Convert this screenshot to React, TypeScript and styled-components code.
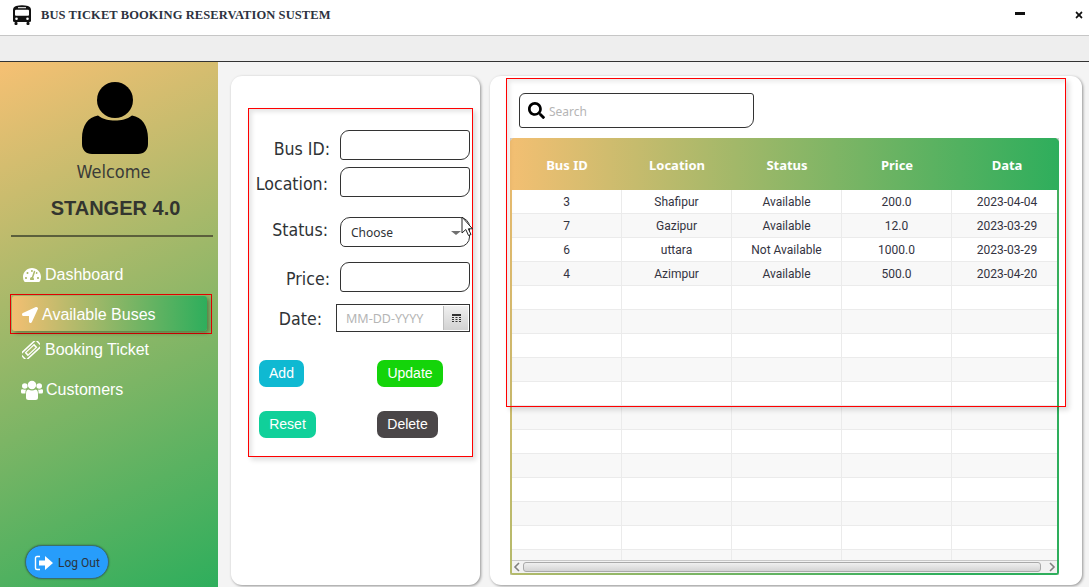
import React from "react";
import styled, { createGlobalStyle } from "styled-components";
import { FaLocationArrow, FaSearch, FaTachometerAlt, FaTimes } from "react-icons/fa";

const Global = createGlobalStyle`
  html, body { margin: 0; padding: 0; background: #f4f4f4; }
  * { box-sizing: border-box; }
`;

const labelFont = `"DejaVu Sans Condensed", "DejaVu Sans", sans-serif`;

const Screen = styled.div`
  width: 1089px; height: 587px; overflow: hidden; display: flex; flex-direction: column;
  background: #f4f4f4; font-family: "Liberation Sans", Arial, sans-serif;
`;
const TitleBar = styled.header`
  height: 36px; flex: none; display: flex; align-items: center; background: #fff;
  border-bottom: 1px solid #c6c6c6; padding: 0 5px 5px 13px;
`;
const BusIcon = styled.svg`
  width: 18px; height: 20px; flex: none;
`;
const TitleText = styled.h1`
  margin: 0 0 0 10px; flex: 1; font: bold 12.5px "Liberation Serif", serif; color: #2c3240; letter-spacing: 0.09px;
`;
const MinButton = styled.span`
  width: 10px; height: 3px; background: #111; margin: 0 49px 3px 0; flex: none;
`;
const MenuBar = styled.div`
  height: 26px; flex: none; background: #eeeeee; border-bottom: 1px solid #333;
`;
const Main = styled.main`
  flex: 1; min-height: 0; display: flex;
`;
const Sidebar = styled.aside`
  width: 218px; flex: none; display: flex; flex-direction: column; padding-top: 20px;
  background: linear-gradient(155deg, #f6c073 0%, #2eae5c 100%);
`;
const Avatar = styled.svg`
  width: 66px; height: 72px; margin-left: 82px; flex: none;
`;
const Welcome = styled.div`
  margin-top: 7px; text-align: center; padding-left: 9px; font: 18px/22px ${labelFont}; color: #3b3b38;
`;
const UserName = styled.div`
  margin-top: 13px; text-align: center; padding-left: 13px; font: bold 20px/24px "Liberation Sans", sans-serif; color: #33352f;
`;
const Divider = styled.hr`
  margin: 15px 5px 0 11px; border: 0; height: 2px; background: #5b5f3c;
`;
const Nav = styled.nav`
  display: flex; flex-direction: column;
`;
const NavItem = styled.div<{ $top: number; $indent: number; $gap: number }>`
  height: 24px; display: flex; align-items: center; margin-top: ${p => p.$top}px;
  padding-left: ${p => p.$indent}px; gap: ${p => p.$gap}px; color: #fff; font-size: 16px; white-space: nowrap;
`;
const ActiveFrame = styled.div`
  margin: 7px 0 0 10px; width: 202px; height: 40px; border: 1px solid #e60000; padding: 1px;
`;
const ActiveItem = styled.div`
  width: 195px; height: 35px; display: flex; align-items: center; gap: 4px; padding: 2px 0 0 10px;
  color: #fff; font-size: 16px; border-radius: 3px; white-space: nowrap;
  background: linear-gradient(to right, #f3bf72 0%, #2eae5c 100%);
  box-shadow: 2px 2px 4px rgba(0,0,0,0.35);
`;
const LogOut = styled.button`
  margin: auto 0 8px 25px; width: 84px; height: 34px; padding: 1px 0 0 8px; display: flex; align-items: center; gap: 5px;
  border-radius: 17px; background: #279dfb; border: 1px solid #3c6f68; box-shadow: 0 0 2px rgba(0,0,0,0.4);
  color: #2b3440; font: 12px Roboto, sans-serif;
`;
const Content = styled.div`
  flex: 1; display: flex; gap: 10px; padding: 14px 7px 2px 13px;
`;
const Panel = styled.section<{ $w: number }>`
  position: relative; width: ${p => p.$w}px; height: 509px; flex: none; background: #fff; border-radius: 11px;
  box-shadow: 1px 1px 3px rgba(0,0,0,0.4);
`;
const FormCard = styled.form`
  width: 225px; height: 349px; margin: 32px 0 0 17px; padding: 21px 2px 0 0;
  border: 1px solid #f00;
  box-shadow: 3px 3px 5px rgba(0,0,0,0.14), inset 3px 3px 4px rgba(0,0,0,0.1);
`;
const Row = styled.div<{ $top: number }>`
  display: flex; justify-content: flex-end; align-items: center; margin-top: ${p => p.$top}px;
`;
const Label = styled.label<{ $gap: number; $shift: number }>`
  font: 17.6px/20px ${labelFont}; color: #2f3336; margin-right: ${p => p.$gap}px; margin-top: ${p => p.$shift}px;
`;
const Field = styled.input`
  width: 130px; height: 30px; background: #fff; border: 1px solid #333; padding: 0 8px; outline: none;
  border-radius: 9px 3px 9px 3px;
`;
const SelectBox = styled.div`
  position: relative; width: 130px; height: 30px; display: flex; align-items: center; justify-content: space-between;
  padding: 1px 8px 0 10px; background: #fff; border: 1px solid #333; border-radius: 10px 10px 10px 5px;
  font: 12px "Noto Sans", sans-serif; color: #2f3336;
`;
const Caret = styled.span`
  width: 0; height: 0; border-left: 5px solid transparent; border-right: 5px solid transparent; border-top: 4px solid #707070;
`;
const Pointer = styled.svg`
  position: absolute; left: 120px; top: -2px; width: 12px; height: 21px;
`;
const DateBox = styled.div`
  width: 134px; height: 28px; display: flex; border: 1px solid #333; background: #fff;
`;
const DateInput = styled.input`
  width: 105px; min-width: 0; border: 0; padding: 0 0 0 9px; outline: none; background: transparent;
  font: 12.5px "Noto Sans", sans-serif; color: #333;
  &::placeholder { color: #b5b5b5; opacity: 1; }
`;
const DateButton = styled.div`
  flex: 1; display: flex; align-items: center; justify-content: center; margin: 1px;
  border-left: 1px solid #bdbdbd; background: linear-gradient(to bottom, #f0f0f0, #d2d2d2);
`;
const Buttons = styled.div<{ $top: number }>`
  display: grid; grid-template-columns: 118px auto; justify-content: start; justify-items: start;
  margin-top: ${p => p.$top}px; padding-left: 10px;
`;
const Action = styled.button<{ $bg: string; $w: number }>`
  width: ${p => p.$w}px; height: 27px; padding: 0 0 2px; border: 0; border-radius: 7px; background: ${p => p.$bg};
  color: #fff; font: 14px "Liberation Sans", sans-serif;
`;
const RedFrame = styled.div`
  position: absolute; left: 16px; top: 2px; width: 560px; height: 329px; border: 1px solid #f00; pointer-events: none;
  box-shadow: 3px 3px 5px rgba(0,0,0,0.14), inset 3px 3px 4px rgba(0,0,0,0.08);
`;
const SearchBar = styled.div`
  width: 235px; height: 35px; margin: 17px 0 0 29px; display: flex; align-items: center; gap: 4px; padding-left: 8px;
  background: #fff; border: 1px solid #333; border-radius: 6px 3px 9px 3px;
`;
const SearchInput = styled.input`
  flex: 1; min-width: 0; border: 0; outline: none; padding: 2px 0 0; background: transparent;
  font: 12px "Noto Sans", sans-serif;
  &::placeholder { color: #b5b5b5; opacity: 1; }
`;
const TableOuter = styled.div`
  width: 549px; height: 437px; margin: 10px 0 0 20px; border: 1px solid #cfcfcf;
`;
const TableBorder = styled.div`
  margin: -1px; height: 437px; padding: 0 2px 2px 2px; display: flex; flex-direction: column;
  border-radius: 5px 5px 3px 3px; background: linear-gradient(115deg, #f3bf72 0%, #2eae5c 85%);
`;
const Head = styled.div`
  height: 52px; flex: none; margin: 0 -2px; padding: 2px 2px 0; display: grid; grid-template-columns: repeat(5, 110px);
  align-items: center; border-radius: 5px 5px 0 0; overflow: hidden;
  background: linear-gradient(to right, #f3bf72 0%, #2eae5c 100%);
  color: #fff; font: bold 13px "Noto Sans", sans-serif; text-align: center;
`;
const Body = styled.div`
  flex: 1; min-height: 0; overflow: hidden; background: #fff;
`;
const TableRow = styled.div<{ $alt: boolean }>`
  height: 24px; display: grid; grid-template-columns: repeat(5, 110px);
  background: ${p => (p.$alt ? "#f8f8f8" : "#fff")}; border-bottom: 1px solid #ebebeb;
`;
const Cell = styled.div`
  display: flex; align-items: center; justify-content: center; border-right: 1px solid #ebebeb;
  font: 12px Roboto, sans-serif; color: #33333f;
  &:last-child { border-right: 0; }
`;
const ScrollBar = styled.div`
  height: 13px; flex: none; display: flex; align-items: center; padding: 0 1px;
  background: #f2f2f2; border-top: 1px solid #c9c9c9;
`;
const Thumb = styled.div`
  flex: none; width: 518px; height: 10px; margin-left: 2px; border: 1px solid #a9a9a9; border-radius: 3px;
  background: linear-gradient(to bottom, #f0f0f0, #d4d4d4);
`;
const Chevron = styled.svg<{ $end?: boolean }>`
  width: 8px; height: 10px; flex: none; margin-left: ${p => (p.$end ? "auto" : "0")};
`;

const rows = [
  ["3", "Shafipur", "Available", "200.0", "2023-04-04"],
  ["7", "Gazipur", "Available", "12.0", "2023-03-29"],
  ["6", "uttara", "Not Available", "1000.0", "2023-03-29"],
  ["4", "Azimpur", "Available", "500.0", "2023-04-20"],
  ...Array.from({ length: 12 }, () => ["", "", "", "", ""]),
];

const TicketIcon = () => (
  <svg width="18" height="18" viewBox="0 0 18 18">
    <g transform="rotate(-43 9 9)">
      <rect x="-1.500" y="4.800" width="21" height="8.400" rx="1" fill="none" stroke="#fff" strokeWidth="1.500" />
      <rect x="2.500" y="6.600" width="13" height="4.800" fill="#fff" />
      <rect x="4" y="7.800" width="10" height="2.400" fill="#a7bc6c" />
    </g>
  </svg>
);

const UsersIcon = () => (
  <svg width="22" height="20" viewBox="0 0 22 20" fill="#fff">
    <circle cx="11" cy="5" r="4.200" />
    <circle cx="3.800" cy="6" r="2.800" />
    <circle cx="18.200" cy="6" r="2.800" />
    <path d="M0 10.500Q0 9 1.500 9.200 3 10 5 9.500 4.400 11 4.400 13.500H1.300Q0 13.500 0 12zM22 10.500Q22 9 20.500 9.200 19 10 17 9.500 17.600 11 17.600 13.500H20.700Q22 13.500 22 12z" />
    <path d="M7.300 9.600Q11 11.400 14.700 9.600 17 10 17 14V17.500Q17 20 14.500 20H7.500Q5 20 5 17.500V14Q5 10 7.300 9.600Z" />
  </svg>
);

const ExitIcon = () => (
  <svg width="19" height="16" viewBox="0 0 19 16">
    <path d="M6 1.500H3Q1.500 1.500 1.500 3V13Q1.500 14.500 3 14.500H6" fill="none" stroke="#fff" strokeWidth="1.400" />
    <path d="M5 5.500h6V1l8 7-8 7v-4.500H5z" fill="#fff" />
  </svg>
);

export default function App() {
  return (
    <Screen>
      <Global />
      <TitleBar>
        <BusIcon viewBox="0 0 18 20">
          <path d="M3 1Q9-.5 15 1 18 2 18 5V16Q18 17 16.500 17H1.500Q0 17 0 16V5Q0 2 3 1Z" fill="#111" />
          <rect x="2" y="4.800" width="14" height="6" rx="1" fill="#fff" />
          <rect x="5" y="2.200" width="8" height="1" fill="#fff" />
          <circle cx="3.500" cy="13.800" r="1.300" fill="#fff" />
          <circle cx="14.500" cy="13.800" r="1.300" fill="#fff" />
          <rect x="1.500" y="17" width="3" height="3" rx="1" fill="#111" />
          <rect x="13.500" y="17" width="3" height="3" rx="1" fill="#111" />
        </BusIcon>
        <TitleText>BUS TICKET BOOKING RESERVATION SUSTEM</TitleText>
        <MinButton />
        <FaTimes size={10} color="#111" />
      </TitleBar>
      <MenuBar />
      <Main>
        <Sidebar>
          <Avatar viewBox="0 0 66 72">
            <circle cx="33" cy="18" r="18" fill="#000" />
            <path d="M16 33.500C21 37.500 27 38.600 33 38.600S45 37.500 50 33.500C60 35 66 44 66 56V62C66 68 62 72 56 72H10C4 72 0 68 0 62V56C0 44 6 35 16 33.500Z" fill="#000" />
          </Avatar>
          <Welcome>Welcome</Welcome>
          <UserName>STANGER 4.0</UserName>
          <Divider />
          <Nav>
            <NavItem $top={26} $indent={23} $gap={4}><FaTachometerAlt size={18} />Dashboard</NavItem>
            <ActiveFrame>
              <ActiveItem><FaLocationArrow size={16} />Available Buses</ActiveItem>
            </ActiveFrame>
            <NavItem $top={4} $indent={22} $gap={5}><TicketIcon />Booking Ticket</NavItem>
            <NavItem $top={16} $indent={21} $gap={3}><UsersIcon />Customers</NavItem>
          </Nav>
          <LogOut type="button"><ExitIcon />Log Out</LogOut>
        </Sidebar>
        <Content>
          <Panel $w={249}>
            <FormCard>
              <Row $top={0}><Label $gap={10} $shift={8}>Bus ID:</Label><Field /></Row>
              <Row $top={7}><Label $gap={12} $shift={4}>Location:</Label><Field /></Row>
              <Row $top={20}>
                <Label $gap={12} $shift={-4}>Status:</Label>
                <SelectBox>
                  Choose
                  <Caret />
                  <Pointer viewBox="0 0 12 21">
                    <path d="M1 1V17L4.800 13.500 7.500 19.500 10 18.500 7.300 12.800H11.500Z" fill="#fff" stroke="#222" strokeWidth="1" />
                  </Pointer>
                </SelectBox>
              </Row>
              <Row $top={15}><Label $gap={10} $shift={4}>Price:</Label><Field /></Row>
              <Row $top={12}>
                <Label $gap={14} $shift={2}>Date:</Label>
                <DateBox>
                  <DateInput placeholder="MM-DD-YYYY" />
                  <DateButton>
                    <svg width="9" height="8" viewBox="0 0 9 8" fill="#333">
                      <path d="M0 0h9v2H0z" />
                      <path d="M0 3h2v1H0zM3.500 3h2v1h-2zM7 3h2v1H7zM0 5h2v1H0zM3.500 5h2v1h-2zM7 5h2v1H7zM0 7h2v1H0zM3.500 7h2v1h-2zM7 7h2v1H7z" />
                    </svg>
                  </DateButton>
                </DateBox>
              </Row>
              <Buttons $top={28}>
                <Action type="button" $bg="#0fb9d2" $w={45}>Add</Action>
                <Action type="button" $bg="#14d40a" $w={66}>Update</Action>
              </Buttons>
              <Buttons $top={24}>
                <Action type="button" $bg="#10d09a" $w={57}>Reset</Action>
                <Action type="button" $bg="#4a4648" $w={61}>Delete</Action>
              </Buttons>
            </FormCard>
          </Panel>
          <Panel $w={592}>
            <SearchBar>
              <FaSearch size={17} color="#000" />
              <SearchInput placeholder="Search" />
            </SearchBar>
            <TableOuter>
              <TableBorder>
                <Head>
                  <span>Bus ID</span><span>Location</span><span>Status</span><span>Price</span><span>Data</span>
                </Head>
                <Body>
                  {rows.map((r, i) => (
                    <TableRow key={i} $alt={i % 2 === 1}>
                      {r.map((c, j) => <Cell key={j}>{c}</Cell>)}
                    </TableRow>
                  ))}
                </Body>
                <ScrollBar>
                  <Chevron viewBox="0 0 8 10"><path d="M6 1 2 5l4 4" fill="none" stroke="#808080" strokeWidth="1.600" /></Chevron>
                  <Thumb />
                  <Chevron $end viewBox="0 0 8 10"><path d="M2 1l4 4-4 4" fill="none" stroke="#808080" strokeWidth="1.600" /></Chevron>
                </ScrollBar>
              </TableBorder>
            </TableOuter>
            <RedFrame />
          </Panel>
        </Content>
      </Main>
    </Screen>
  );
}
